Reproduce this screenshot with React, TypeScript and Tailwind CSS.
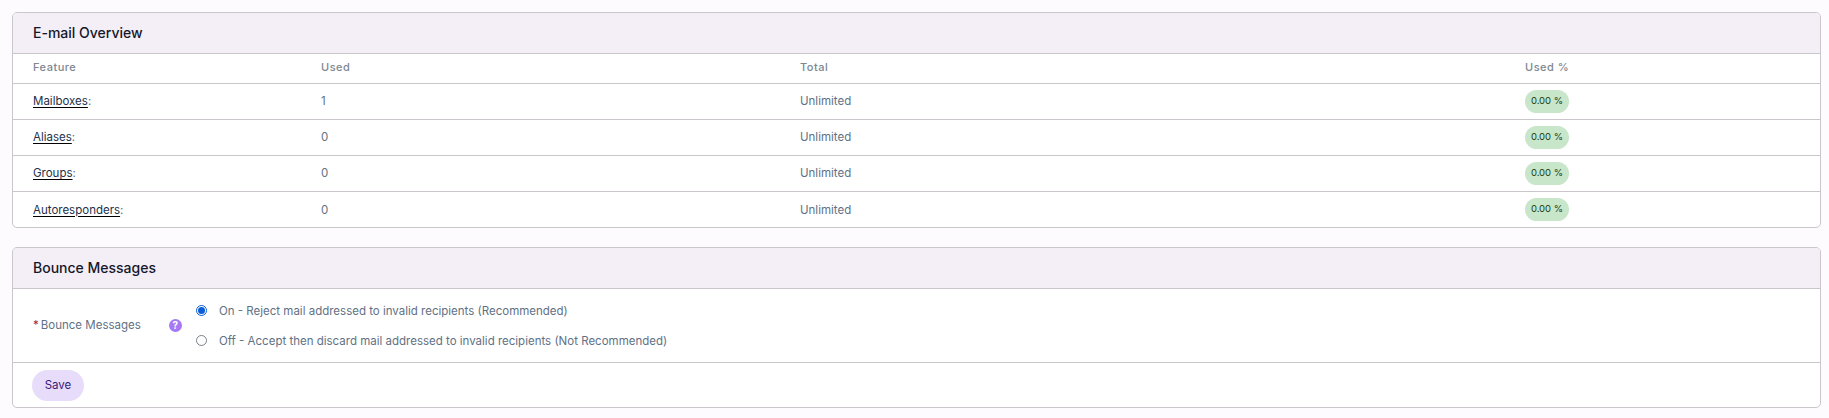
const rows: [string, string][] = [
  ["Mailboxes", "1"],
  ["Aliases", "0"],
  ["Groups", "0"],
  ["Autoresponders", "0"],
];

export default function App() {
  return (
    <div className="min-h-[418px] bg-[#fdfbfe] pt-3 pl-3 pr-2 font-['Inter',sans-serif] text-[11.5px] text-[#5f7185]">
      <section className="overflow-hidden rounded-[5px] border border-[#cac6cc] bg-white">
        <h2 className="flex h-[41px] items-center border-b border-[#cac6cc] bg-[#f4eff7] px-5 pb-[2px] text-[14px] font-medium text-[#15172a]">E-mail Overview</h2>
        <table className="w-full table-fixed border-collapse">
          <colgroup>
            <col className="w-[288px]" />
            <col className="w-[479px]" />
            <col className="w-[725px]" />
            <col />
          </colgroup>
          <thead>
            <tr className="h-[29px] text-left text-[11px] tracking-[0.5px] text-[#7d8791]">
              <th className="px-5 pb-[2px] font-medium">Feature</th>
              <th className="px-5 pb-[2px] font-medium">Used</th>
              <th className="px-5 pb-[2px] font-medium">Total</th>
              <th className="px-5 pb-[2px] font-medium">Used %</th>
            </tr>
          </thead>
          <tbody>
            {rows.map(([name, used]) => (
              <tr key={name} className="h-9 border-t border-[#cac6cc]">
                <td className="px-5 pt-[2px]"><a className="text-[#23304a] underline decoration-black underline-offset-2">{name}</a>:</td>
                <td className="px-5 pt-[2px]">{used}</td>
                <td className="px-5 pt-[2px]">Unlimited</td>
                <td className="px-5">
                  <span className="flex h-[23px] w-11 items-center justify-center rounded-full bg-[#c8e6c9] text-[9.5px] text-[#173f1b]">0.00 %</span>
                </td>
              </tr>
            ))}
          </tbody>
        </table>
      </section>

      <section className="mt-[19px] overflow-hidden rounded-[5px] border border-[#cac6cc] bg-white">
        <h2 className="flex h-[41px] items-center border-b border-[#cac6cc] bg-[#f4eff7] px-5 pb-[2px] text-[14px] font-medium text-[#15172a]">Bounce Messages</h2>
        <div className="flex h-[74px] items-center border-b border-[#cac6cc] pl-5">
          <div className="flex w-[163px] shrink-0 items-center">
            <span className="mr-[2px] text-[#b3261e]">*</span>
            <span>Bounce Messages</span>
            <span className="ml-[28px] flex size-[13px] items-center justify-center rounded-full bg-[#a678f5] text-[10px] font-bold text-white">?</span>
          </div>
          <div className="flex flex-col gap-[12px]">
            <label className="flex h-[18px] items-center gap-3">
              <span className="flex size-[11px] items-center justify-center rounded-full border border-[#0b5ed7]"><span className="size-[7px] rounded-full bg-[#0b5ed7]" /></span>
              <span className="pt-[2px]">On - Reject mail addressed to invalid recipients (Recommended)</span>
            </label>
            <label className="flex h-[18px] items-center gap-3">
              <span className="size-[11px] rounded-full border border-[#7d7f88]" />
              <span className="pt-[2px]">Off - Accept then discard mail addressed to invalid recipients (Not Recommended)</span>
            </label>
          </div>
        </div>
        <div className="flex h-[44px] items-center pl-[19px]">
          <button className="h-[31px] w-[52px] rounded-full bg-[#e8dcfb] pt-[2px] text-[11.5px] text-[#3a1a78]">Save</button>
        </div>
      </section>
    </div>
  );
}
